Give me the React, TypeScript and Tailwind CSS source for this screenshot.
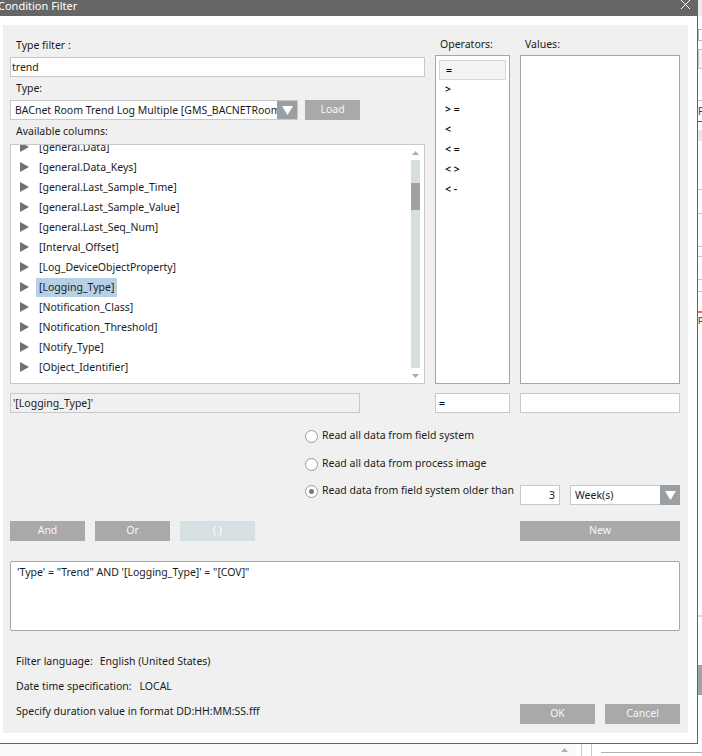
import React from 'react';

const columns = [
  '[general.Data]',
  '[general.Data_Keys]',
  '[general.Last_Sample_Time]',
  '[general.Last_Sample_Value]',
  '[general.Last_Seq_Num]',
  '[Interval_Offset]',
  '[Log_DeviceObjectProperty]',
  '[Logging_Type]',
  '[Notification_Class]',
  '[Notification_Threshold]',
  '[Notify_Type]',
  '[Object_Identifier]',
];

const operators = ['=', '>', '> =', '<', '< =', '< >', '< -'];

function TreeArrow() {
  return (
    <svg width="9" height="10" viewBox="0 0 9 10" className="shrink-0">
      <polygon points="0,0 9,5 0,10" fill="#707070" />
    </svg>
  );
}

function DropArrow() {
  return (
    <svg width="11" height="9" viewBox="0 0 11 9">
      <polygon points="0,0 11,0 5.5,9" fill="#ffffff" />
    </svg>
  );
}

function GrayButton({ label, className }: { label: string; className: string }) {
  return (
    <div className={`flex h-[20px] items-center justify-center bg-[#a9a9a9] text-[#f7f7f7] ${className}`}>
      {label}
    </div>
  );
}

function Radio({ label, checked }: { label: string; checked?: boolean }) {
  return (
    <div className="flex h-[20px] items-center">
      <div className="flex h-[13px] w-[13px] items-center justify-center rounded-full border border-[#9a9a9a] bg-white">
        {checked && <div className="h-[5px] w-[5px] rounded-full bg-[#7a7a7a]" />}
      </div>
      <span className="ml-[4px]">{label}</span>
    </div>
  );
}

function ColumnTree() {
  return (
    <div className="flex h-[240px] border border-[#c9c9c9] bg-white">
      <div className="flex-1 overflow-hidden">
        <div className="-mt-[8px]">
          {columns.map((c) => (
            <div key={c} className="flex h-[20px] items-center pl-[9px]">
              <TreeArrow />
              <span
                className={`ml-[7px] h-[19px] px-[3px] leading-[19px] ${
                  c === '[Logging_Type]' ? 'bg-[#b7d0e6]' : ''
                }`}
              >
                {c}
              </span>
            </div>
          ))}
        </div>
      </div>
      <div className="mr-[4px] flex w-[9px] flex-col">
        <div className="flex h-[15px] items-center justify-center">
          <svg width="7" height="4" viewBox="0 0 7 4">
            <polygon points="0,4 7,4 3.5,0" fill="#a9aeb1" />
          </svg>
        </div>
        <div className="h-[208px] bg-[#d7dee1] pt-[23px]">
          <div className="h-[27px] bg-[#9ea2a5]" />
        </div>
        <div className="flex h-[15px] items-center justify-center">
          <svg width="7" height="4" viewBox="0 0 7 4">
            <polygon points="0,0 7,0 3.5,4" fill="#a9aeb1" />
          </svg>
        </div>
      </div>
    </div>
  );
}

function RightStrip() {
  return (
    <div className="flex w-[4px] flex-col bg-white">
      <div className="h-[16px] bg-[#ececec]" />
      <div className="h-[13px]" />
      <div className="h-[12px] border-y border-l border-[#b5b5b5]" />
      <div className="h-[8px]" />
      <div className="h-[20px] border-y border-l border-[#c4c4c4] bg-[#f2f2f2]" />
      <div className="h-[31px]" />
      <div className="h-[1px] bg-[#c8c8c8]" />
      <div className="h-[20px] text-[10px] leading-[20px] text-[#3b2a6b]">P</div>
      <div className="h-[1px] bg-[#555555]" />
      <div className="h-[8px]" />
      <div className="h-[11px] bg-[#e6e6e6]" />
      <div className="h-[48px]" />
      <div className="h-[1px] bg-[#c8c8c8]" />
      <div className="h-[23px]" />
      <div className="h-[1px] bg-[#c8c8c8]" />
      <div className="h-[32px]" />
      <div className="h-[1px] bg-[#c8c8c8]" />
      <div className="h-[9px]" />
      <div className="h-[1px] bg-[#c8c8c8]" />
      <div className="h-[22px]" />
      <div className="h-[1px] bg-[#c8c8c8]" />
      <div className="h-[11px]" />
      <div className="h-[1px] bg-[#c8c8c8]" />
      <div className="h-[19px]" />
      <div className="h-[2px] bg-[#d9754a]" />
      <div className="h-[12px] text-[9px] leading-[12px] text-[#333]">p</div>
      <div className="h-[290px]" />
      <div className="h-[2px] bg-[#cfe0ea]" />
      <div className="h-[48px]" />
      <div className="h-[30px] bg-[#9aa6a8]" />
      <div className="flex-1" />
    </div>
  );
}

export default function App() {
  return (
    <div className="flex h-[756px] w-[702px] flex-col overflow-hidden bg-white font-['Noto_Sans',sans-serif] text-[10.5px] text-[#1b1b1b]">
      <div className="flex h-[744px]">
        <div className="flex w-[698px] flex-col border-r border-b border-[#646464]">
          <div className="flex h-[16px] items-start justify-between bg-[#666666] text-white">
            <span className="-ml-[2px] text-[11px] leading-[11px]">Condition Filter</span>
            <svg width="11" height="10" viewBox="0 0 11 10" className="mr-[6px]">
              <path d="M1 0 L10 9 M10 0 L1 9" stroke="#ffffff" strokeWidth="1" />
            </svg>
          </div>
          <div className="flex-1 pl-[3px] pt-[9px]">
            <div className="flex h-[708px] w-[685px] flex-col bg-[#f0f0f0] pl-[7px] pr-[8px] pt-[11px]">
              <div className="grid grid-cols-[415px_75px_160px] gap-x-[10px]">
                <div className="flex flex-col">
                  <div className="h-[21px] pl-[6px] leading-[18px]">Type filter :</div>
                  <div className="h-[20px] border border-[#c8c8c8] bg-white pl-[1px] leading-[18px]">trend</div>
                  <div className="h-[23px] pl-[6px] leading-[22px]">Type:</div>
                  <div className="flex items-center">
                    <div className="flex h-[20px] w-[288px] border border-[#c8c8c8] bg-white">
                      <div className="flex-1 overflow-hidden whitespace-nowrap pl-[4px] leading-[18px]">
                        BACnet Room Trend Log Multiple [GMS_BACNETRoom
                      </div>
                      <div className="flex w-[20px] items-center justify-center bg-[#9a9fa3]">
                        <DropArrow />
                      </div>
                    </div>
                    <GrayButton label="Load" className="ml-[7px] w-[55px]" />
                  </div>
                  <div className="h-[24px] pl-[6px] leading-[22px]">Available columns:</div>
                  <ColumnTree />
                </div>

                <div className="flex flex-col">
                  <div className="h-[19px] pl-[5px] leading-[17px]">Operators:</div>
                  <div className="h-[329px] border border-[#a5a5aa] bg-white pt-[4px]">
                    {operators.map((op, i) => (
                      <div
                        key={op}
                        className={`mx-[3px] h-[20px] pl-[6px] font-semibold leading-[19px] text-black ${
                          i === 0 ? 'border border-[#d6d6d6] bg-[#f3f3f3] pl-[5px] leading-[17px]' : ''
                        }`}
                      >
                        {op}
                      </div>
                    ))}
                  </div>
                </div>

                <div className="flex flex-col">
                  <div className="h-[19px] pl-[5px] leading-[17px]">Values:</div>
                  <div className="h-[329px] border border-[#a5a5aa] bg-white" />
                </div>
              </div>

              <div className="mt-[9px] grid grid-cols-[350px_55px_75px_160px] gap-x-[10px]">
                <div className="h-[20px] border border-[#c8c8c8] bg-[#f0f0f0] pl-[2px] leading-[18px]">'[Logging_Type]'</div>
                <div />
                <div className="h-[20px] border border-[#c8c8c8] bg-white pl-[3px] font-semibold leading-[18px] text-black">=</div>
                <div className="h-[20px] border border-[#c8c8c8] bg-white" />
              </div>

              <div className="mt-[13px] flex flex-col pl-[295px]">
                <Radio label="Read all data from field system" />
                <div className="h-[8px]" />
                <Radio label="Read all data from process image" />
              </div>
              <div className="mt-[7px] flex items-start">
                <div className="w-[510px] pl-[295px]">
                  <Radio label="Read data from field system older than" checked />
                </div>
                <div className="mt-[4px] h-[20px] w-[40px] border border-[#c8c8c8] bg-white pr-[4px] text-right leading-[18px]">3</div>
                <div className="mt-[4px] ml-[10px] flex h-[20px] w-[110px] border border-[#c8c8c8] bg-white">
                  <div className="flex-1 pl-[4px] leading-[18px]">Week(s)</div>
                  <div className="-my-[1px] -mr-[1px] flex w-[20px] items-center justify-center bg-[#9a9fa3]">
                    <DropArrow />
                  </div>
                </div>
              </div>

              <div className="mt-[16px] flex items-center">
                <GrayButton label="And" className="w-[75px]" />
                <GrayButton label="Or" className="ml-[10px] w-[75px]" />
                <div className="ml-[10px] flex h-[20px] w-[75px] items-center justify-center bg-[#d6dfe2] text-white">( )</div>
                <div className="flex-1" />
                <GrayButton label="New" className="w-[160px]" />
              </div>

              <div className="mt-[20px] h-[70px] w-[670px] rounded-[2px] border border-[#a8a8a8] bg-white pl-[6px] pt-[2px] leading-[16px]">
                'Type' = "Trend" AND '[Logging_Type]' = "[COV]"
              </div>

              <div className="mt-[21px] flex h-[20px] items-center pl-[6px]">
                <span>Filter language:</span>
                <span className="ml-[7px]">English (United States)</span>
              </div>
              <div className="mt-[5px] flex h-[20px] items-center pl-[6px]">
                <span>Date time specification:</span>
                <span className="ml-[8px]">LOCAL</span>
              </div>
              <div className="mt-[5px] flex h-[22px] items-start">
                <div className="flex h-[20px] w-[510px] items-center pl-[6px]">
                  Specify duration value in format DD:HH:MM:SS.fff
                </div>
                <GrayButton label="OK" className="mt-[2px] w-[75px]" />
                <GrayButton label="Cancel" className="mt-[2px] ml-[10px] w-[75px]" />
              </div>
            </div>
          </div>
        </div>
        <RightStrip />
      </div>
      <div className="flex h-[12px]">
        <div className="flex w-[576px] justify-end bg-[#fafafa] pr-[8px] pt-[4px]">
          <svg width="7" height="4" viewBox="0 0 7 4">
            <polygon points="0,4 7,4 3.5,0" fill="#b0b0b0" />
          </svg>
        </div>
        <div className="w-[5px]" />
        <div className="w-[1px] bg-[#c8c8c8]" />
        <div className="w-[9px]" />
        <div className="w-[1px] bg-[#c8c8c8]" />
        <div className="w-[9px]" />
        <div className="flex flex-1 flex-col">
          <div className="h-[8px]" />
          <div className="h-[1px] bg-[#b0b0b0]" />
        </div>
      </div>
    </div>
  );
}
